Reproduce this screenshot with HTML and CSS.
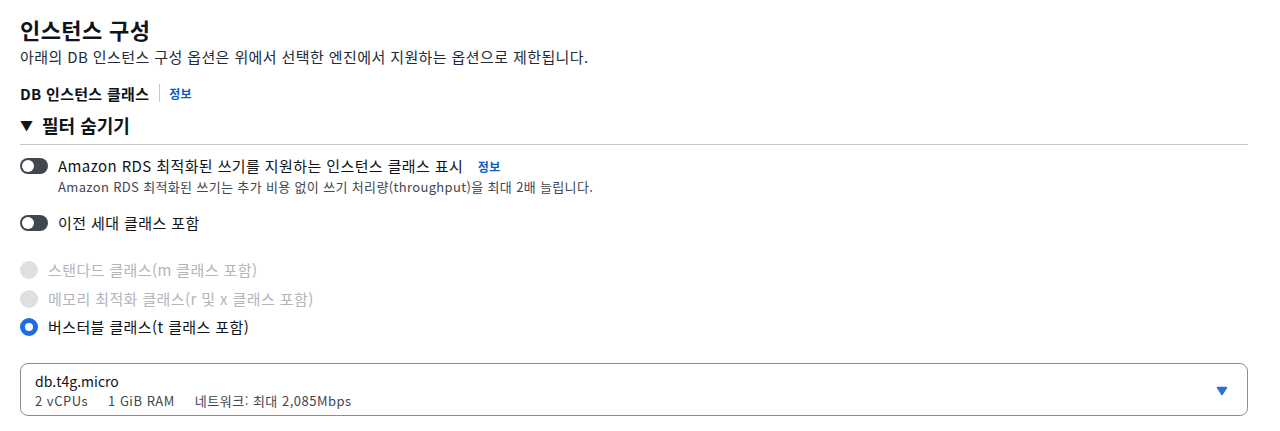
FILE: index.html
```html
<!DOCTYPE html>
<html lang="ko">
<head>
<meta charset="utf-8">
<link rel="stylesheet" href="styles.css">
</head>
<body>
<div class="page">
  <h2 class="title">인스턴스 구성</h2>
  <p class="desc">아래의 DB 인스턴스 구성 옵션은 위에서 선택한 엔진에서 지원하는 옵션으로 제한됩니다.</p>
  <div class="label-row">
    <span class="label">DB 인스턴스 클래스</span>
    <span class="sep"></span>
    <a class="info">정보</a>
  </div>
  <div class="expander">
    <span class="caret">▼</span>
    <span>필터 숨기기</span>
  </div>
  <div class="filters">
    <div class="toggle-row">
      <span class="toggle"><span class="knob"></span></span>
      <div class="toggle-text">
        <div class="toggle-label">Amazon RDS 최적화된 쓰기를 지원하는 인스턴스 클래스 표시 <a class="info info-inline">정보</a></div>
        <div class="toggle-desc">Amazon RDS 최적화된 쓰기는 추가 비용 없이 쓰기 처리량(throughput)을 최대 2배 늘립니다.</div>
      </div>
    </div>
    <div class="toggle-row second">
      <span class="toggle"><span class="knob"></span></span>
      <div class="toggle-text">
        <div class="toggle-label">이전 세대 클래스 포함</div>
      </div>
    </div>
    <div class="radios">
      <div class="radio disabled"><span class="dot"></span><span>스탠다드 클래스(m 클래스 포함)</span></div>
      <div class="radio disabled"><span class="dot"></span><span>메모리 최적화 클래스(r 및 x 클래스 포함)</span></div>
      <div class="radio checked"><span class="dot"></span><span>버스터블 클래스(t 클래스 포함)</span></div>
    </div>
  </div>
  <div class="select">
    <div class="select-text">
      <div class="select-main">db.t4g.micro</div>
      <div class="select-tags"><span>2 vCPUs</span><span>1 GiB RAM</span><span>네트워크: 최대 2,085Mbps</span></div>
    </div>
    <svg class="select-caret" width="12" height="10" viewBox="0 0 12 10"><path d="M1.5 1.5 H10.5 L6 8.5 Z" fill="#2f6fdc" stroke="#2f6fdc" stroke-width="1.5" stroke-linejoin="round"/></svg>
  </div>
</div>
</body>
</html>
```

FILE: styles.css
```css
* { box-sizing: border-box; }
html, body { margin: 0; padding: 0; background: #fff; }
body {
  font-family: "Noto Sans CJK KR", "Noto Sans", sans-serif;
  color: #0f141a;
}
.page { padding: 13px 32px 0 20px; }
.title {
  margin: 0;
  font-size: 22px;
  letter-spacing: 0.4px;
  line-height: 32px;
  font-weight: 700;
}
.desc {
  margin: 2px 0 0;
  font-size: 15px;
  letter-spacing: 0.4px;
  line-height: 20px;
  color: #232b37;
}
.label-row {
  display: flex;
  align-items: center;
  margin-top: 16px;
  height: 20px;
}
.label { font-size: 15px; font-weight: 700; letter-spacing: 0.3px; }
.sep {
  width: 1px;
  height: 18px;
  background: #c6c6cd;
  margin: 0 9px 0 10px;
}
.info {
  color: #0a5bc6;
  font-size: 12px;
  font-weight: 700;
  letter-spacing: 0.3px;
}
.expander {
  display: flex;
  align-items: center;
  gap: 9px;
  margin-top: 10px;
  font-size: 18px;
  font-weight: 700;
  line-height: 24px;
  padding-bottom: 7px;
  border-bottom: 1px solid #c6c6cd;
}
.caret { font-size: 13px; }
.filters { padding-top: 10px; }
.toggle-row { display: flex; align-items: flex-start; gap: 10px; }
.toggle-row.second { margin-top: 17px; }
.toggle {
  flex: none;
  width: 28px;
  height: 16px;
  margin-top: 3px;
  border-radius: 8px;
  background: #424650;
  position: relative;
}
.knob {
  position: absolute;
  left: 2px; top: 2px;
  width: 12px; height: 12px;
  border-radius: 50%;
  background: #fff;
}
.toggle-label { font-size: 15px; letter-spacing: 0.4px; line-height: 22px; }
.info-inline { margin-left: 10px; }
.toggle-desc { font-size: 13px; letter-spacing: 0.35px; line-height: 17px; color: #424650; }
.radios {
  margin-top: 26px;
  display: flex;
  flex-direction: column;
  gap: 8.5px;
}
.radio {
  display: flex;
  align-items: center;
  gap: 10px;
  font-size: 15px;
  letter-spacing: 0.4px;
  line-height: 20px;
}
.radio .dot {
  width: 18px; height: 18px;
  border-radius: 50%;
  flex: none;
}
.radio.disabled { color: #b4b4bb; }
.radio.disabled .dot { background: #dedee3; }
.radio.checked .dot { border: 5px solid #1d6de5; background: #fff; }
.select {
  margin-top: 26px;
  border: 1px solid #8c8c94;
  border-radius: 8px;
  height: 53px;
  display: flex;
  align-items: center;
  justify-content: space-between;
  padding: 0 19px 0 14px;
}
.select-main { font-size: 14px; line-height: 20px; padding-top: 1px; }
.select-tags {
  font-size: 13px;
  letter-spacing: 0.5px;
  line-height: 19px;
  color: #424650;
  display: flex;
  gap: 20px;
}
.select-caret { margin-top: 2px; }
```
